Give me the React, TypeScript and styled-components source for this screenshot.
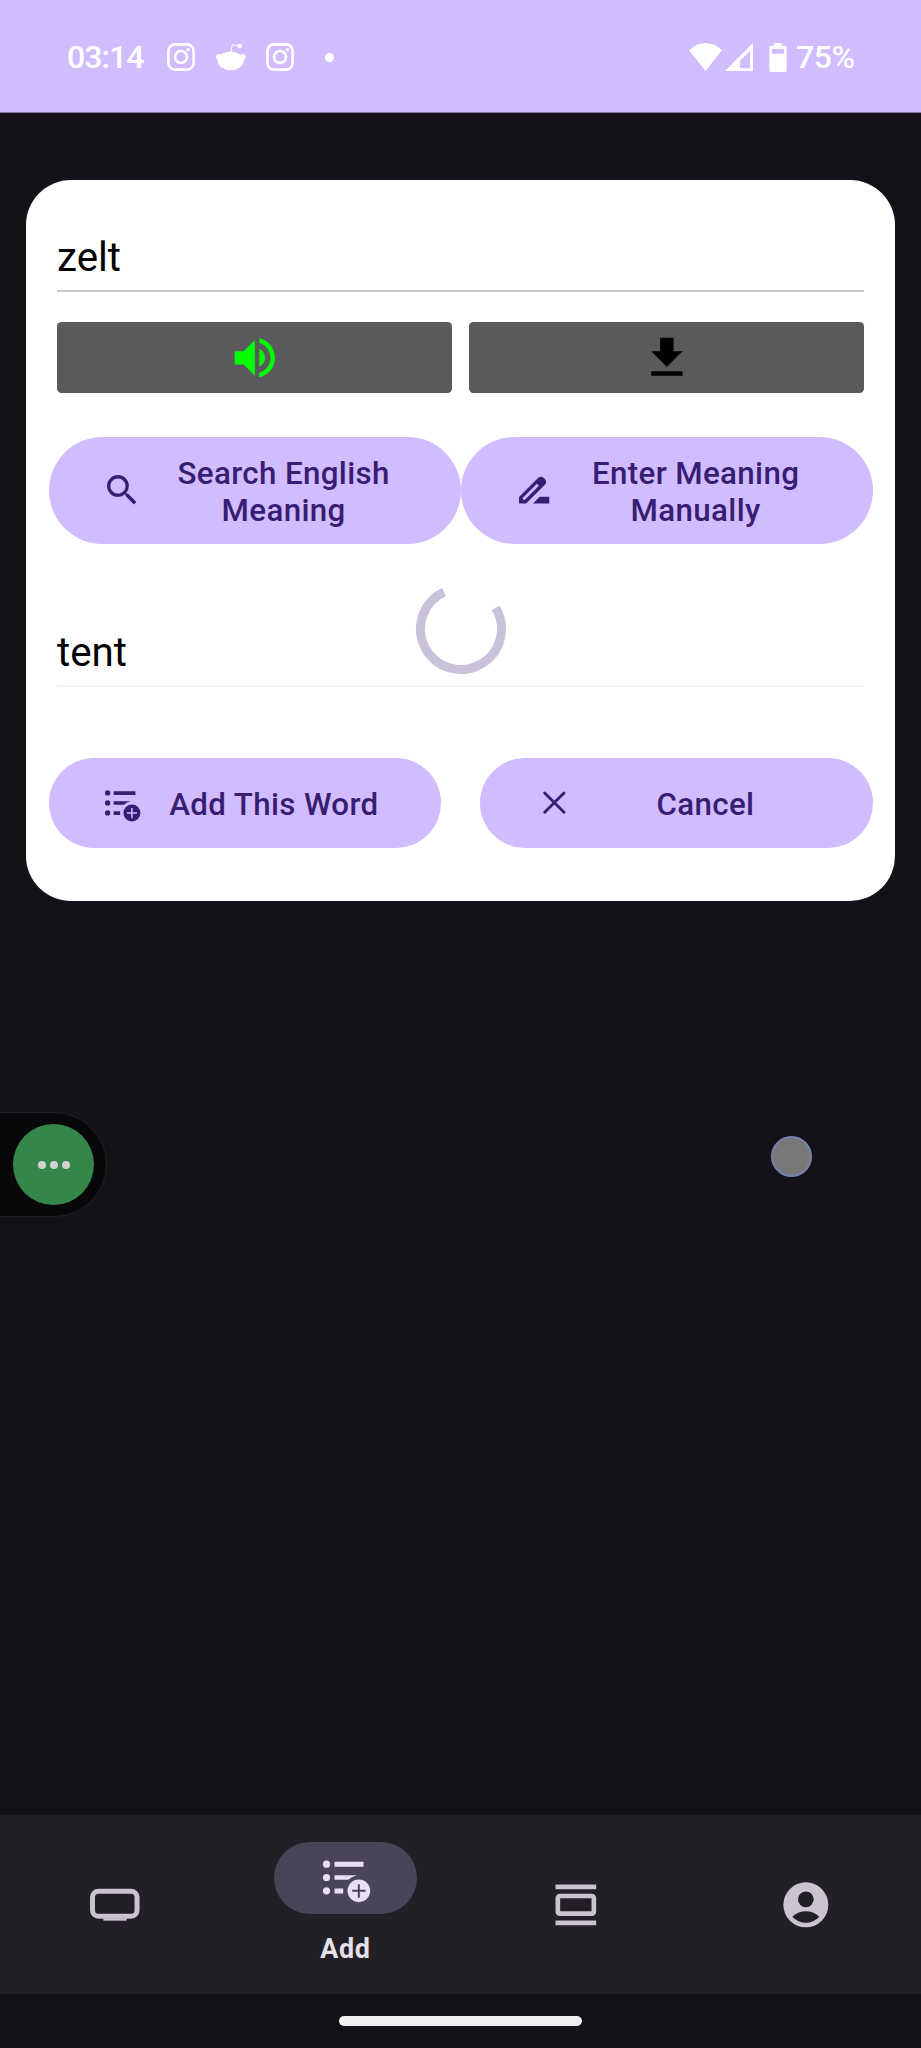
import React from 'react';
import styled, { createGlobalStyle } from 'styled-components';

const Global = createGlobalStyle`
  * { box-sizing: border-box; }
  body { margin: 0; background: #141218; font-family: Roboto, sans-serif; }
`;

const Screen = styled.div`
  position: relative;
  display: flex;
  flex-direction: column;
  width: 921px;
  height: 2048px;
  overflow: hidden;
  background: #141118;
`;

const StatusBar = styled.header`
  display: flex;
  align-items: center;
  justify-content: space-between;
  height: 113px;
  padding: 2px 66px 0 67px;
  background: #d0bcff;
  border-bottom: 1px solid #8478a2;
  color: #fff;
`;

const StatusGroup = styled.div`
  display: flex;
  align-items: center;
`;

const StatusText = styled.span<{ $width: number; $left?: number; $spacing: number }>`
  width: ${(p) => p.$width}px;
  margin-left: ${(p) => p.$left ?? 0}px;
  font: 500 32px/36px Roboto, sans-serif;
  letter-spacing: ${(p) => p.$spacing}px;
  white-space: nowrap;
`;

const StatusIcon = styled.svg<{ $left: number }>`
  display: block;
  flex: none;
  margin-left: ${(p) => p.$left}px;
`;

const Main = styled.main`
  flex: 1;
  padding: 67px 26px 0;
`;

const Card = styled.section`
  display: flex;
  flex-direction: column;
  width: 869px;
  height: 721px;
  padding: 40px 22.5px 53px;
  border-radius: 45px;
  background: #fff;
`;

const Field = styled.div<{ $line: string }>`
  display: flex;
  align-items: flex-end;
  height: 72px;
  margin: 0 8.5px;
  padding-bottom: 9px;
  border-bottom: 2.5px solid ${(p) => p.$line};
  color: #000;
  font-size: 40.3px;
  line-height: 47px;
`;

const ToolRow = styled.div`
  display: flex;
  gap: 17px;
  margin: 30px 8.5px 0;
`;

const ToolButton = styled.button`
  display: flex;
  flex: 1;
  align-items: center;
  justify-content: center;
  height: 71px;
  padding: 0;
  border: 0;
  border-radius: 4.5px;
  background: #5a595b;
`;

const ActionRow = styled.div<{ $top: number; $gap: number }>`
  display: flex;
  gap: ${(p) => p.$gap}px;
  margin-top: ${(p) => p.$top}px;
`;

const PillButton = styled.button<{ $height: number }>`
  display: flex;
  flex: 1;
  align-items: center;
  height: ${(p) => p.$height}px;
  padding: 0 53.7px;
  border: 0;
  border-radius: 54px;
  background: #d0bcff;
  color: #381e72;
  font: 500 31.3px/36.8px Roboto, sans-serif;
  letter-spacing: 0.36px;
`;

const PillLabel = styled.span`
  flex: 1;
  margin-left: 18px;
  padding-top: 4px;
  text-align: center;
  white-space: pre-line;
`;

const MeaningArea = styled.div`
  position: relative;
  height: 143px;
  display: flex;
  flex-direction: column;
  justify-content: flex-end;
`;

const Spinner = styled.svg`
  position: absolute;
  left: 366px;
  top: 39px;
`;

const NavBar = styled.nav`
  display: flex;
  height: 179px;
  background: #221f26;
`;

const NavItem = styled.a`
  display: flex;
  flex: 1;
  flex-direction: column;
  align-items: center;
  justify-content: center;
  color: #cac4d0;
`;

const ActivePill = styled.span`
  display: flex;
  align-items: center;
  justify-content: center;
  width: 143px;
  height: 72px;
  border-radius: 36px;
  background: #4a4458;
  color: #e8def8;
`;

const NavLabel = styled.span`
  margin: 19px 0 2px;
  color: #e6e0e9;
  font: 700 26.9px/32px Roboto, sans-serif;
  letter-spacing: 0.6px;
`;

const GestureArea = styled.footer`
  display: flex;
  justify-content: center;
  height: 54px;
  padding-top: 22px;
`;

const GestureHandle = styled.div`
  width: 243px;
  height: 10px;
  border-radius: 5px;
  background: #f1eef2;
`;

const FloatingTab = styled.div`
  position: absolute;
  left: -4px;
  top: 1112px;
  display: flex;
  align-items: center;
  justify-content: flex-end;
  width: 111px;
  height: 105px;
  padding-right: 12px;
  border: 1px solid #232027;
  border-radius: 0 53px 53px 0;
  background: #08080a;
`;

const FloatingButton = styled.div`
  display: flex;
  align-items: center;
  justify-content: center;
  gap: 4px;
  width: 81px;
  height: 81px;
  border-radius: 50%;
  background: #35864a;
`;

const Dot = styled.i`
  width: 8px;
  height: 8px;
  border-radius: 50%;
  background: #d0d3d0;
`;

const TouchPoint = styled.div`
  position: absolute;
  left: 771px;
  top: 1136px;
  width: 41px;
  height: 41px;
  border: 2px solid #7485ad;
  border-radius: 50%;
  background: #797878;
`;

const InstagramIcon = ({ left }: { left: number }) => (
  <StatusIcon $left={left} width="28" height="28" viewBox="0 0 28 28" fill="none" stroke="#fff">
    <rect x="1.4" y="1.4" width="25.2" height="25.2" rx="6.5" strokeWidth="2.6" />
    <circle cx="14" cy="14" r="6" strokeWidth="2.5" />
    <circle cx="21.3" cy="6.8" r="1.7" fill="#fff" stroke="none" />
  </StatusIcon>
);

const RedditIcon = () => (
  <StatusIcon $left={20} width="32" height="28" viewBox="0 0 96 84" fill="#fff">
    <ellipse cx="47" cy="53.5" rx="39" ry="28" />
    <circle cx="12" cy="42" r="9" />
    <circle cx="83" cy="42" r="9" />
    <circle cx="74" cy="9" r="7" />
    <path d="M47 30L52 5L72 9" fill="none" stroke="#fff" strokeWidth="3" />
  </StatusIcon>
);

const ListAddIcon = ({ size }: { size: number }) => (
  <svg width={size} height={size} viewBox="955.5 153.5 161 161" fill="currentColor" overflow="visible">
    <circle cx="978" cy="193" r="10.8" />
    <circle cx="978" cy="233" r="10.8" />
    <circle cx="978" cy="273" r="10.8" />
    <path d="M1002 186h87v15h-87zM1002 226h68q-16 3-27 14h-41zM1002 266h26v15h-26z" />
    <path
      fillRule="evenodd"
      d="M1075 239a34 34 0 1 1 0 68a34 34 0 1 1 0-68zM1072 253v17h-17v6h17v18h6v-18h17v-6h-17v-17z"
    />
  </svg>
);

const SearchIcon = () => (
  <svg width="40.3" height="40.3" viewBox="0 0 24 24" fill="currentColor">
    <path d="M15.5 14h-.79l-.28-.27A6.47 6.47 0 0 0 16 9.5 6.5 6.5 0 1 0 9.5 16c1.61 0 3.09-.59 4.23-1.57l.27.28v.79l5 4.99L20.49 19l-4.99-5zm-6 0C7.01 14 5 11.99 5 9.5S7.01 5 9.5 5 14 7.01 14 9.5 11.99 14 9.5 14z" />
  </svg>
);

const PencilIcon = () => (
  <svg width="40.3" height="40.3" viewBox="0 0 24 24" fill="currentColor">
    <path
      fillRule="evenodd"
      d="M3 20v-3.9L14.3 4.8Q16 3.2 17.8 4.8L18.4 5.4Q20 7.1 18.4 8.8L7.2 20zM5.3 17.7h1.2l8.3-8.3-1.2-1.2-8.3 8.3zM11.3 20l4-4H21v4z"
    />
  </svg>
);

const CloseIcon = () => (
  <svg
    width="40.3"
    height="40.3"
    viewBox="0 0 40.3 40.3"
    fill="none"
    stroke="currentColor"
    strokeWidth="2.9"
    strokeLinecap="round"
  >
    <path d="M10.7 10L30 29.2M30 10L10.7 29.2" />
  </svg>
);

export default function App() {
  return (
    <>
      <Global />
      <Screen>
        <StatusBar>
          <StatusGroup>
            <StatusText $width={80} $spacing={-0.95}>03:14</StatusText>
            <InstagramIcon left={20} />
            <RedditIcon />
            <InstagramIcon left={19} />
            <StatusIcon $left={31} width="9" height="9" viewBox="0 0 9 9">
              <circle cx="4.5" cy="4.5" r="4.5" fill="#fff" />
            </StatusIcon>
          </StatusGroup>
          <StatusGroup>
            <StatusIcon $left={0} width="33" height="28" viewBox="0 0 99 84" fill="#fff">
              <path d="M0 22Q22 0 49.5 0T99 22L49.5 84z" />
            </StatusIcon>
            <StatusIcon $left={3} width="28" height="28" viewBox="0 0 84 84" fill="#fff">
              <path fillRule="evenodd" d="M84 0v84H0zM75 24L45 53v23h30z" />
            </StatusIcon>
            <StatusIcon $left={16} width="18" height="29" viewBox="0 0 54 87" fill="#fff">
              <path
                fillRule="evenodd"
                d="M16 0h22v8h10q5 0 5 5v69q0 5-5 5H6q-5 0-5-5V13q0-5 5-5h10zM9 18v14h36V18z"
              />
            </StatusIcon>
            <StatusText $width={59} $left={9} $spacing={-0.4}>75%</StatusText>
          </StatusGroup>
        </StatusBar>

        <Main>
          <Card>
            <Field $line="#c9c7cc">zelt</Field>
            <ToolRow>
              <ToolButton aria-label="Play">
                <svg width="53.7" height="53.7" viewBox="0 0 24 24" fill="#00ff00">
                  <path d="M3 9v6h4l5 5V4L7 9H3zm13.5 3c0-1.77-1.02-3.29-2.5-4.03v8.05c1.48-.73 2.5-2.25 2.5-4.02zM14 3.23v2.06c2.89.86 5 3.54 5 6.71s-2.11 5.85-5 6.71v2.06c4.01-.91 7-4.49 7-8.77s-2.99-7.86-7-8.77z" />
                </svg>
              </ToolButton>
              <ToolButton aria-label="Download">
                <svg width="53.7" height="53.7" viewBox="0 0 24 24" fill="#000">
                  <path d="M19 9h-4V3H9v6H5l7 7 7-7zM5 18v2h14v-2H5z" />
                </svg>
              </ToolButton>
            </ToolRow>
            <ActionRow $top={44} $gap={0}>
              <PillButton $height={107}>
                <SearchIcon />
                <PillLabel>{'Search English\nMeaning'}</PillLabel>
              </PillButton>
              <PillButton $height={107}>
                <PencilIcon />
                <PillLabel>{'Enter Meaning\nManually'}</PillLabel>
              </PillButton>
            </ActionRow>
            <MeaningArea>
              <Field $line="#f5f3f7">tent</Field>
              <Spinner width="92" height="92" viewBox="-46 -46 92 92">
                <path
                  d="M34.5 -21.2A40.5 40.5 0 1 1 -17 -36.8"
                  fill="none"
                  stroke="#cac1da"
                  strokeWidth="9"
                />
              </Spinner>
            </MeaningArea>
            <ActionRow $top={71} $gap={39}>
              <PillButton $height={90}>
                <ListAddIcon size={40.3} />
                <PillLabel>Add This Word</PillLabel>
              </PillButton>
              <PillButton $height={90}>
                <CloseIcon />
                <PillLabel>Cancel</PillLabel>
              </PillButton>
            </ActionRow>
          </Card>
        </Main>

        <NavBar>
          <NavItem>
            <svg
              width="53.7"
              height="53.7"
              viewBox="264 232 161 161"
              fill="none"
              stroke="currentColor"
              strokeWidth="15"
            >
              <rect x="277.5" y="271.5" width="133.5" height="75" rx="18" />
              <path d="M310 356.5h70" strokeWidth="7" />
            </svg>
          </NavItem>
          <NavItem>
            <ActivePill>
              <ListAddIcon size={53.7} />
            </ActivePill>
            <NavLabel>Add</NavLabel>
          </NavItem>
          <NavItem>
            <svg
              width="53.7"
              height="53.7"
              viewBox="265.5 232 161 161"
              fill="none"
              stroke="currentColor"
              strokeWidth="14"
            >
              <path d="M285 258.5h122M285 366.5h122" />
              <rect x="292" y="286" width="108" height="53" rx="6" />
            </svg>
          </NavItem>
          <NavItem>
            <svg width="53.7" height="53.7" viewBox="956 232 161 161">
              <circle cx="1036.5" cy="312.5" r="67.5" fill="currentColor" />
              <circle cx="1036.5" cy="296" r="23.5" fill="#221f26" />
              <path d="M996 348Q1015 332 1036.5 332T1077 348Q1060 366 1036.5 366T996 348z" fill="#221f26" />
            </svg>
          </NavItem>
        </NavBar>
        <GestureArea>
          <GestureHandle />
        </GestureArea>

        <FloatingTab>
          <FloatingButton>
            <Dot />
            <Dot />
            <Dot />
          </FloatingButton>
        </FloatingTab>
        <TouchPoint />
      </Screen>
    </>
  );
}
